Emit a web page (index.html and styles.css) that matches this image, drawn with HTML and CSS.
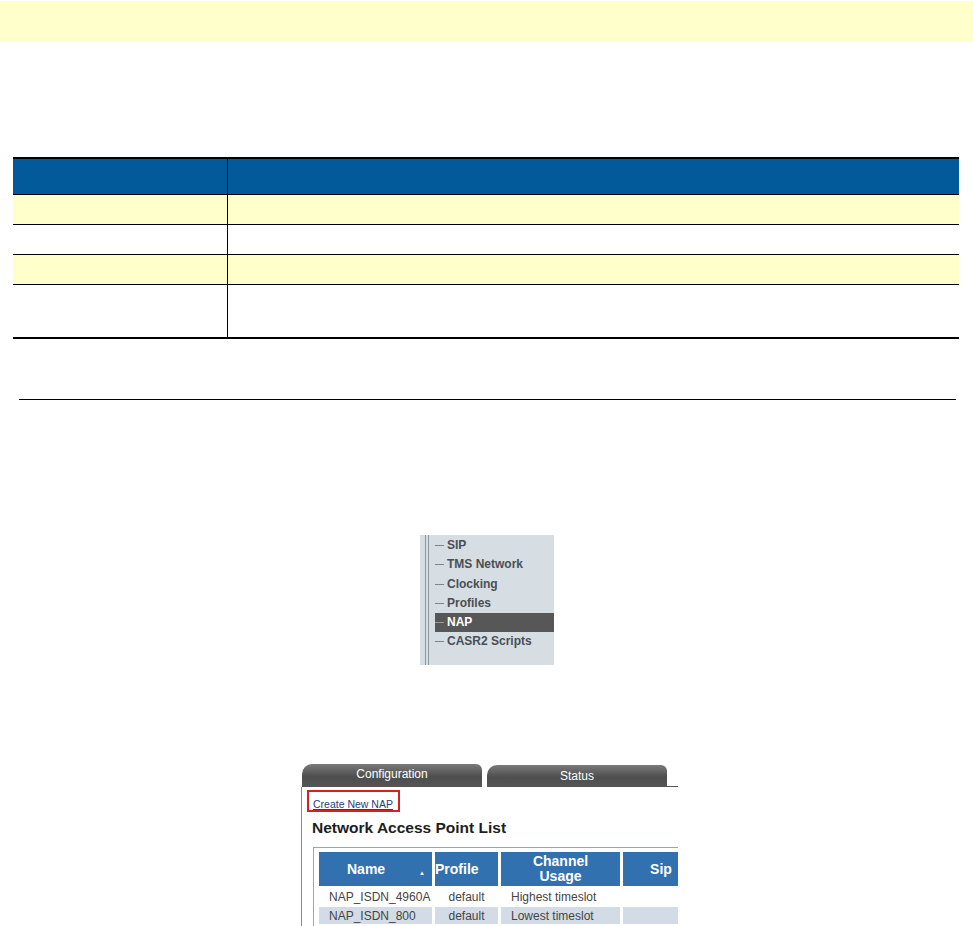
FILE: index.html
```html
<!DOCTYPE html>
<html lang="en">
    <head>
        <meta charset="utf-8">
        <title>NAP</title>
        <link rel="stylesheet" href="styles.css">
    </head>
    <body>

        <div class="banner"></div>

        <table class="params">
            <tr class="params__head"><th class="params__name"></th><th></th></tr>
            <tr class="params__row--odd"><td></td><td></td></tr>
            <tr><td></td><td></td></tr>
            <tr class="params__row--odd"><td></td><td></td></tr>
            <tr class="params__row--tall"><td></td><td></td></tr>
        </table>

        <hr class="rule">

        <div class="figure figure--menu">
            <div class="menu">
                <div class="menu__rails"><span></span><span></span></div>
                <ul class="menu__list">
                    <li>SIP</li>
                    <li>TMS Network</li>
                    <li>Clocking</li>
                    <li>Profiles</li>
                    <li class="active">NAP</li>
                    <li>CASR2 Scripts</li>
                </ul>
            </div>
        </div>

        <div class="figure figure--screen">
            <div class="screen">
                <div class="tabs">
                    <div class="tab">Configuration</div>
                    <div class="tab tab--status">Status</div>
                    <div class="tabs__fill"></div>
                </div>
                <div class="panel">
                    <div class="panel__link"><a href="#">Create New NAP</a></div>
                    <h2 class="panel__title">Network Access Point List</h2>
                    <div class="nap-frame">
                        <table class="nap">
                            <tr>
                                <th class="nap__name">Name <span class="nap__sort">&#9650;</span></th>
                                <th class="nap__profile">Profile</th>
                                <th class="nap__usage">Channel<br>Usage</th>
                                <th class="nap__sip">Sip</th>
                            </tr>
                            <tr>
                                <td>NAP_ISDN_4960A</td>
                                <td class="center">default</td>
                                <td>Highest timeslot</td>
                                <td></td>
                            </tr>
                            <tr class="nap__alt">
                                <td>NAP_ISDN_800</td>
                                <td class="center">default</td>
                                <td>Lowest timeslot</td>
                                <td></td>
                            </tr>
                        </table>
                    </div>
                </div>
            </div>
        </div>

    </body>
</html>
```

FILE: styles.css
```css
* {
    box-sizing: border-box;
}

body {
    margin: 0;
    padding: 0;
    background: #fff;
    font-family: "Liberation Sans", Arial, sans-serif;
}

.banner {
    margin-top: 1px;
    height: 40px;
    background-color: #ffffcc;
}

/* parameter table */
.params {
    margin: 116px 0 0 13px;
    width: 946px;
    border-collapse: collapse;
    border-top: 2px solid #000;
    border-bottom: 2px solid #000;
}

.params th,
.params td {
    height: 30px;
    padding: 0;
    border-top: 1px solid #000;
}

.params th + th,
.params td + td {
    border-left: 1px solid #000;
}

.params__head th {
    height: 36px;
    background-color: #035a9b;
    border-top: none;
}

.params__name {
    width: 214px;
}

.params__row--odd td {
    background-color: #ffffcc;
}

.params__row--tall td {
    height: 54px;
}

.rule {
    margin: 60px 17px 0 19px;
    border: none;
    border-top: 1.5px solid #000;
}

/* figures */
.figure {
    display: flex;
    justify-content: center;
}

.figure--menu {
    margin-top: 135px;
}

.menu {
    width: 134px;
    height: 130px;
    background-color: #d6dde3;
    display: flex;
    margin-left: 1px;
}

.menu__rails {
    display: flex;
    gap: 2px;
    margin-left: 5px;
}

.menu__rails span {
    width: 1px;
    height: 100%;
    background-color: #8d98a2;
}

.menu__list {
    list-style: none;
    margin: 0;
    padding: 1px 0 0 0;
    flex: 1;
}

.menu__list li {
    position: relative;
    height: 19.3px;
    line-height: 19px;
    padding-left: 12px;
    margin-left: 6px;
    font-size: 12px;
    font-weight: bold;
    color: #4a4f55;
}

.menu__list li::before {
    content: "";
    position: absolute;
    left: 0;
    top: 9px;
    width: 9px;
    height: 1px;
    background-color: #7d868f;
}

.menu__list li.active {
    background-color: #575757;
    color: #fff;
}

.menu__list li.active::before {
    background-color: #999;
}

.figure--screen {
    margin-top: 99px;
}

.screen {
    width: 378px;
    height: 162px;
    overflow: hidden;
    margin-left: 5px;
}

.tabs {
    display: flex;
    align-items: flex-end;
    height: 23px;
    padding-left: 2px;
}

.tab {
    width: 180px;
    height: 23px;
    border-radius: 10px 6px 0 0;
    background: linear-gradient(#7a7a7a, #4e4e4e 55%, #555);
    color: #fff;
    font-size: 12px;
    text-align: center;
    line-height: 20px;
}

.tab--status {
    width: 180px;
    height: 22px;
    margin-left: 5px;
    line-height: 22px;
}

.tabs__fill {
    flex: 1;
    border-bottom: 1px solid #555;
}

.panel {
    border-left: 1px solid #8a8a8a;
    margin-left: 1px;
    padding: 3px 0 0 5px;
}

.panel__link {
    display: inline-block;
    border: 2px solid #d62020;
    padding: 2px 5px 3px 4px;
    height: 22px;
}

.panel__link a {
    font-size: 10.5px;
    color: #28407c;
}

.panel__title {
    margin: 6px 0 0 5px;
    font-size: 15.5px;
    font-weight: bold;
    color: #1e1e1e;
    line-height: 19px;
}

.nap-frame {
    margin: 10px 0 0 6px;
    border-top: 1px solid #9aa6b2;
    border-left: 1px solid #9aa6b2;
    padding: 4px 0 0 5px;
}

.nap {
    border-collapse: separate;
    border-spacing: 3px 2px;
    margin: -2px 0 0 -3px;
    font-size: 12px;
    color: #444;
    width: 386px;
    table-layout: fixed;
}

.nap th {
    background-color: #3271b0;
    color: #fff;
    font-size: 14px;
    font-weight: bold;
    height: 34px;
    padding: 0;
    line-height: 15px;
    position: relative;
}

.nap__name {
    width: 113px;
    text-align: left;
    padding-left: 28px !important;
}

.nap__profile {
    width: 63px;
    text-align: left;
}

.nap__usage {
    width: 119px;
}

.nap__sort {
    position: absolute;
    right: 7px;
    top: 14px;
    font-size: 6px;
    color: #fff;
}

.nap td {
    height: 17px;
    padding: 0 0 0 10px;
    white-space: nowrap;
}

.nap td.center {
    text-align: center;
    padding: 0;
}

.nap__alt td {
    background-color: #d3dce6;
}
```
